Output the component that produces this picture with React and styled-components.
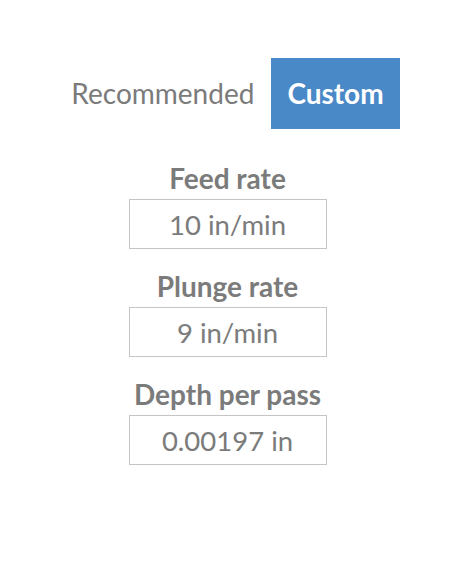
import React, { useState } from "react";
import styled, { createGlobalStyle } from "styled-components";

const GlobalStyle = createGlobalStyle`
  body {
    margin: 0;
    background: #fff;
    font-family: Lato, "Open Sans", sans-serif;
  }
`;

const fields = [
    { label: "Feed rate", value: "10 in/min" },
    { label: "Plunge rate", value: "9 in/min" },
    { label: "Depth per pass", value: "0.00197 in" },
];

export default function App() {
    const [mode, setMode] = useState("custom");

    return (
        <>
            <GlobalStyle />
            <Main>
                <Toggle>
                    <ToggleButton
                        $active={mode === "recommended"}
                        onClick={() => setMode("recommended")}
                    >
                        Recommended
                    </ToggleButton>
                    <ToggleButton
                        $active={mode === "custom"}
                        onClick={() => setMode("custom")}
                    >
                        Custom
                    </ToggleButton>
                </Toggle>
                <Fields>
                    {fields.map((f) => (
                        <Field key={f.label}>
                            <Label>{f.label}</Label>
                            <ValueBox>{f.value}</ValueBox>
                        </Field>
                    ))}
                </Fields>
            </Main>
        </>
    );
}

const Main = styled.main`
  display: flex;
  flex-direction: column;
  align-items: center;
  padding-top: 58px;
  padding-left: 3px;
`;

const Toggle = styled.div`
  display: flex;
  gap: 1px;
  margin-bottom: 33px;
`;

const ToggleButton = styled.button`
  border: none;
  font-family: Lato, "Open Sans", sans-serif;
  font-size: 28px;
  line-height: 39px;
  padding: 16px 16px;
  cursor: pointer;
  background: ${(p) => (p.$active ? "#4a89c8" : "transparent")};
  color: ${(p) => (p.$active ? "#fff" : "#7b7b7b")};
  font-weight: ${(p) => (p.$active ? 700 : 400)};
`;

const Fields = styled.div`
  display: flex;
  flex-direction: column;
  align-items: center;
  gap: 21px;
`;

const Field = styled.div`
  display: flex;
  flex-direction: column;
  align-items: center;
`;

const Label = styled.div`
  font-size: 28px;
  line-height: 32px;
  font-weight: 700;
  color: #7b7b7b;
  margin-bottom: 5px;
`;

const ValueBox = styled.div`
  box-sizing: border-box;
  width: 198px;
  height: 50px;
  border: 1px solid #c4c4c4;
  display: flex;
  align-items: center;
  justify-content: center;
  font-size: 27.5px;
  color: #7b7b7b;
`;
